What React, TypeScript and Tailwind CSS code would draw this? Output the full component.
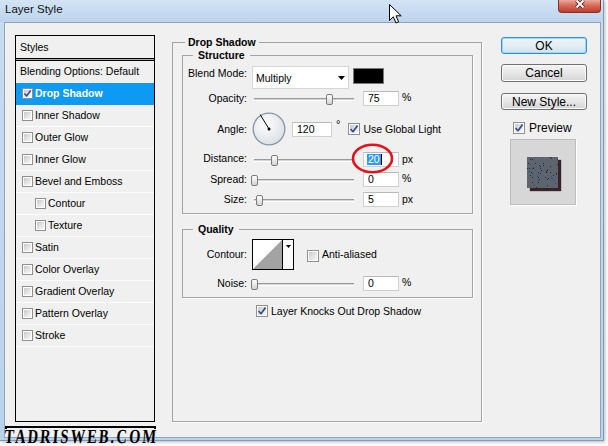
import React from "react";

type CbProps = { checked?: boolean; small?: boolean; className?: string };

function Checkbox({ checked = false, small = false, className = "" }: CbProps) {
  const size = small ? "w-[11px] h-[11px]" : "w-[12px] h-[12px]";
  return (
    <span className={`relative flex shrink-0 ${size} border border-[#8f8f8f] bg-white p-[1px] ${className}`}>
      <span className="flex-1 bg-gradient-to-br from-[#c9c9c9] via-[#e2e2e2] to-[#f8f8f8]" />
      {checked && (
        <svg className="absolute inset-0 w-full h-full" viewBox="0 0 10 10">
          <path d="M1.6 5 L4 7.7 L8.6 1.4" fill="none" stroke="#2f4f8e" strokeWidth="1.7" strokeLinejoin="round" />
        </svg>
      )}
    </span>
  );
}

function Slider({ at }: { at: number }) {
  return (
    <div className="relative ml-[3px] w-[108px] h-[15px] shrink-0">
      <div className="mx-[4px] mt-[7px] h-[3px] border-t border-[#9a9a9a] border-b border-b-white bg-[#d4d4d4]" />
      <div
        className="absolute top-[3px] w-[7px] h-[11px] rounded-[2px] border border-[#7c7c7c] bg-gradient-to-b from-white to-[#d2d2d2]"
        style={{ left: at }}
      />
    </div>
  );
}

function Field({ value, wide = false }: { value: string; wide?: boolean }) {
  return (
    <div
      className={`${wide ? "w-[40px] ml-[6px]" : "w-[36px] ml-[5px]"} h-[15px] shrink-0 bg-white border border-[#cfcfcf] border-t-[#b9b9b9] flex items-center pl-[4px]`}
    >
      {value}
    </div>
  );
}

const listItems: { label: string; checked?: boolean; selected?: boolean; indent?: boolean }[] = [
  { label: "Drop Shadow", checked: true, selected: true },
  { label: "Inner Shadow" },
  { label: "Outer Glow" },
  { label: "Inner Glow" },
  { label: "Bevel and Emboss" },
  { label: "Contour", indent: true },
  { label: "Texture", indent: true },
  { label: "Satin" },
  { label: "Color Overlay" },
  { label: "Gradient Overlay" },
  { label: "Pattern Overlay" },
  { label: "Stroke" },
];

const dots: { x: number; y: number; c: string }[] = (() => {
  let s = 11;
  const rnd = () => {
    s = (s * 9301 + 49297) % 233280;
    return s / 233280;
  };
  const out: { x: number; y: number; c: string }[] = [];
  for (let i = 0; i < 80; i++) {
    const x = Math.floor(rnd() * 31);
    const y = Math.floor(rnd() * 31);
    const r = rnd();
    out.push({ x, y, c: r < 0.22 ? "#b9462f" : r < 0.75 ? "#252a33" : r < 0.88 ? "#2d3fa0" : "#7d6a6a" });
  }
  return out;
})();

export default function App() {
  return (
    <div className="relative w-[608px] h-[446px] overflow-hidden bg-[#fbfbfb] font-['Liberation_Sans',Arial,sans-serif] text-[10.5px] leading-[13px] text-black">
      {/* Window */}
      <div className="flex flex-col w-[604px] h-[441px] bg-gradient-to-b from-[#c8dcf1] to-[#bad2eb] border-r border-b border-[#7f99b6] shadow-[1px_1px_3px_rgba(0,0,0,0.25)]">
        {/* Title bar */}
        <div className="flex h-[22px] shrink-0 bg-gradient-to-b from-[#d3e4f6] via-[#c7dcf1] to-[#bdd4ed]">
          <span className="pl-[5px] pt-[3px] text-[11.5px] leading-[13px] text-[#111]">Layer Style</span>
          <div className="ml-auto mr-[2px] w-[43px] h-[13px] rounded-b-[4px] border border-t-0 border-[#8c2d23] bg-gradient-to-b from-[#e9a99c] via-[#d46656] to-[#c13a2c] flex items-start justify-center">
            <svg width="12" height="9" viewBox="0 0 12 9">
              <path d="M2.5 0.5 L9.5 7.5 M9.5 0.5 L2.5 7.5" stroke="#4a1410" strokeWidth="3.6" />
              <path d="M2.5 0.5 L9.5 7.5 M9.5 0.5 L2.5 7.5" stroke="#ffffff" strokeWidth="2.1" />
            </svg>
          </div>
        </div>

        {/* Client area */}
        <div className="flex items-start ml-[4px] mr-[2px] h-[416px] border border-[#8fa3ba] bg-[#f0f0f0]">
          {/* Styles list */}
          <div className="ml-[10px] mt-[12px] w-[140px] h-[387px] shrink-0 border border-black flex flex-col">
            <div className="h-[22px] flex items-center pl-[4px]">Styles</div>
            <div className="h-[3px] border-y border-black bg-[#ababab]" />
            <div className="h-[22px] flex items-center pl-[4px] border-b border-[#fcfcfc]">Blending Options: Default</div>
            {listItems.map((it) => (
              <div
                key={it.label}
                className={`h-[22px] flex items-center border-b ${it.indent ? "pl-[19px]" : "pl-[6px]"} ${
                  it.selected ? "bg-[#0c9af3] border-[#0c9af3] text-white font-bold" : "border-[#fcfcfc]"
                }`}
              >
                <Checkbox small checked={it.checked} />
                <span className="ml-[2px]">{it.label}</span>
              </div>
            ))}
          </div>

          {/* Drop Shadow group */}
          <fieldset className="ml-[17px] mt-[13px] w-[310px] h-[386px] shrink-0 border border-[#a3a3a3] shadow-[1px_1px_0_#ffffff]">
            <legend className="ml-[12px] px-[3px] font-bold leading-[13px]">Drop Shadow</legend>
            <div className="ml-[9px] w-[291px]">
              {/* Structure */}
              <fieldset className="h-[165px] border border-[#a3a3a3] shadow-[1px_1px_0_#ffffff]">
                <legend className="ml-[10px] px-[5px] font-bold leading-[13px]">Structure</legend>

                <div className="flex items-start mt-[4px] h-[23px]">
                  <span className="w-[64px] shrink-0 text-right pt-[1px]">Blend Mode:</span>
                  <div className="ml-[5px] w-[97px] h-[23px] shrink-0 bg-white border border-[#d6d6d6] flex items-center pl-[3px]">
                    <span className="pt-[1px]">Multiply</span>
                    <svg className="ml-auto mr-[3px]" width="7" height="4" viewBox="0 0 7 4">
                      <path d="M0 0 H7 L3.5 4 Z" fill="#000" />
                    </svg>
                  </div>
                  <div className="ml-[4px] mt-[2px] w-[31px] h-[16px] shrink-0 bg-black border border-[#7a7a7a]" />
                </div>

                <div className="flex items-center mt-[2px] h-[15px]">
                  <span className="w-[64px] shrink-0 text-right">Opacity:</span>
                  <Slider at={76} />
                  <Field value="75" />
                  <span className="ml-[3px] -mt-[2px]">%</span>
                </div>

                <div className="flex items-center mt-[6px] h-[34px]">
                  <span className="w-[64px] shrink-0 text-right">Angle:</span>
                  <svg className="ml-[5px] shrink-0" width="34" height="34" viewBox="0 0 34 34">
                    <defs>
                      <radialGradient id="dialg" cx="40%" cy="35%" r="70%">
                        <stop offset="0" stopColor="#ffffff" />
                        <stop offset="1" stopColor="#dadee3" />
                      </radialGradient>
                    </defs>
                    <circle cx="17" cy="17" r="15.8" fill="url(#dialg)" stroke="#8596aa" strokeWidth="1.3" />
                    <line x1="17" y1="17" x2="8.2" y2="2.6" stroke="#000" strokeWidth="1" />
                    <circle cx="17" cy="17" r="1.5" fill="#000" />
                  </svg>
                  <Field value="120" wide />
                  <span className="ml-[4px] self-start mt-[6px] text-[11px]">°</span>
                  <Checkbox checked className="ml-[8px]" />
                  <span className="ml-[3px]">Use Global Light</span>
                </div>

                <div className="flex items-center mt-[6px] h-[15px]">
                  <span className="w-[64px] shrink-0 text-right -mt-[2px]">Distance:</span>
                  <Slider at={21} />
                  <div className="relative ml-[5px] w-[36px] h-[15px] shrink-0 bg-white border border-[#cfcfcf] border-t-[#b9b9b9] flex items-center pl-[3px]">
                    <span className="bg-[#3399ff] text-white px-[1px] leading-[11px]">20</span>
                    <span className="w-px h-[11px] bg-black" />
                    <svg className="absolute -left-[13px] -top-[10px]" width="44" height="32" viewBox="0 0 44 32">
                      <ellipse cx="21.5" cy="15.5" rx="19.5" ry="13.8" fill="none" stroke="#e3121a" strokeWidth="2.6" />
                    </svg>
                  </div>
                  <span className="ml-[3px]">px</span>
                </div>

                <div className="flex items-center mt-[5px] h-[15px]">
                  <span className="w-[64px] shrink-0 text-right">Spread:</span>
                  <Slider at={1} />
                  <Field value="0" />
                  <span className="ml-[3px] -mt-[2px]">%</span>
                </div>

                <div className="flex items-center mt-[5px] h-[15px]">
                  <span className="w-[64px] shrink-0 text-right">Size:</span>
                  <Slider at={6} />
                  <Field value="5" />
                  <span className="ml-[3px]">px</span>
                </div>
              </fieldset>

              {/* Quality */}
              <fieldset className="mt-[9px] h-[75px] border border-[#a3a3a3] shadow-[1px_1px_0_#ffffff]">
                <legend className="ml-[10px] px-[5px] font-bold leading-[13px]">Quality</legend>
                <div className="flex items-start mt-[3px] h-[31px]">
                  <span className="w-[64px] shrink-0 text-right mt-[9px]">Contour:</span>
                  <div className="ml-[5px] flex w-[42px] h-[31px] shrink-0 border border-black bg-white">
                    <svg width="29" height="29" viewBox="0 0 29 29">
                      <path d="M0 29 L29 0 V29 Z" fill="#a3a3a3" />
                    </svg>
                    <div className="flex-1 border-l border-black flex justify-center pt-[5px] bg-[#fafafa]">
                      <svg width="5" height="3" viewBox="0 0 5 3">
                        <path d="M0 0 H5 L2.5 3 Z" fill="#000" />
                      </svg>
                    </div>
                  </div>
                  <Checkbox className="ml-[13px] mt-[11px]" />
                  <span className="ml-[3px] mt-[9px]">Anti-aliased</span>
                </div>
                <div className="flex items-center mt-[6px] h-[15px]">
                  <span className="w-[64px] shrink-0 text-right">Noise:</span>
                  <Slider at={1} />
                  <Field value="0" />
                  <span className="ml-[3px] -mt-[2px]">%</span>
                </div>
              </fieldset>

              <div className="flex items-center ml-[74px] mt-[7px] h-[12px]">
                <Checkbox checked />
                <span className="ml-[3px]">Layer Knocks Out Drop Shadow</span>
              </div>
            </div>
          </fieldset>

          {/* Buttons column */}
          <div className="ml-[19px] mt-[14px] w-[86px] shrink-0 flex flex-col">
            <div className="h-[17px] flex items-center justify-center rounded-[3px] border border-[#2f8fd6] shadow-[inset_0_0_0_1px_#9ddcf8] bg-gradient-to-b from-[#eef5fa] via-[#e3edf4] to-[#d3e2ec] text-[12px] leading-[14px]">
              OK
            </div>
            <div className="mt-[10px] h-[18px] flex items-center justify-center rounded-[3px] border border-[#707070] shadow-[inset_0_0_0_1px_#fbfbfb] bg-gradient-to-b from-[#f4f4f4] via-[#e7e7e7] to-[#d3d3d3] text-[12px] leading-[14px]">
              Cancel
            </div>
            <div className="mt-[11px] h-[17px] flex items-center justify-center rounded-[3px] border border-[#707070] shadow-[inset_0_0_0_1px_#fbfbfb] bg-gradient-to-b from-[#f4f4f4] via-[#e7e7e7] to-[#d3d3d3] text-[12px] leading-[14px]">
              New Style...
            </div>
            <div className="mt-[11px] h-[13px] flex items-center pl-[12px]">
              <Checkbox checked />
              <span className="ml-[4px] text-[12px] leading-[14px]">Preview</span>
            </div>
            <div className="ml-[9px] mt-[5px] w-[66px] h-[66px] bg-[#d7d7d7] border border-[#bdbdbd] shadow-[1px_1px_0_#ffffff] pt-[17px] pl-[16px]">
              <div className="w-[31px] h-[31px] bg-[#5a6570] shadow-[3px_3px_1px_#3a2326]">
                <svg width="31" height="31" viewBox="0 0 31 31">
                  {dots.map((d, i) => (
                    <rect key={i} x={d.x} y={d.y} width="1" height="1" fill={d.c} />
                  ))}
                </svg>
              </div>
            </div>
          </div>
        </div>
      </div>

      {/* Mouse cursor */}
      <svg className="absolute left-[389px] top-[4px]" width="13" height="20" viewBox="0 0 13 20">
        <path d="M0.5 0.5 V16.5 L4.3 12.8 L7 19 L9.6 17.9 L7 11.8 H12.2 Z" fill="#ffffff" stroke="#000000" strokeWidth="1" />
      </svg>

      {/* Watermark */}
      <div className="absolute left-[5px] top-[426px] w-max">
        <div className="w-[151px] h-[3px] border-t-2 border-x-2 border-black" />
        <div className="w-max origin-top-left scale-x-[0.72] -skew-x-6 whitespace-nowrap font-['Liberation_Serif',serif] font-bold text-[20px] leading-[15px] tracking-[3px] text-black">
          TADRISWEB.COM
        </div>
      </div>
    </div>
  );
}
